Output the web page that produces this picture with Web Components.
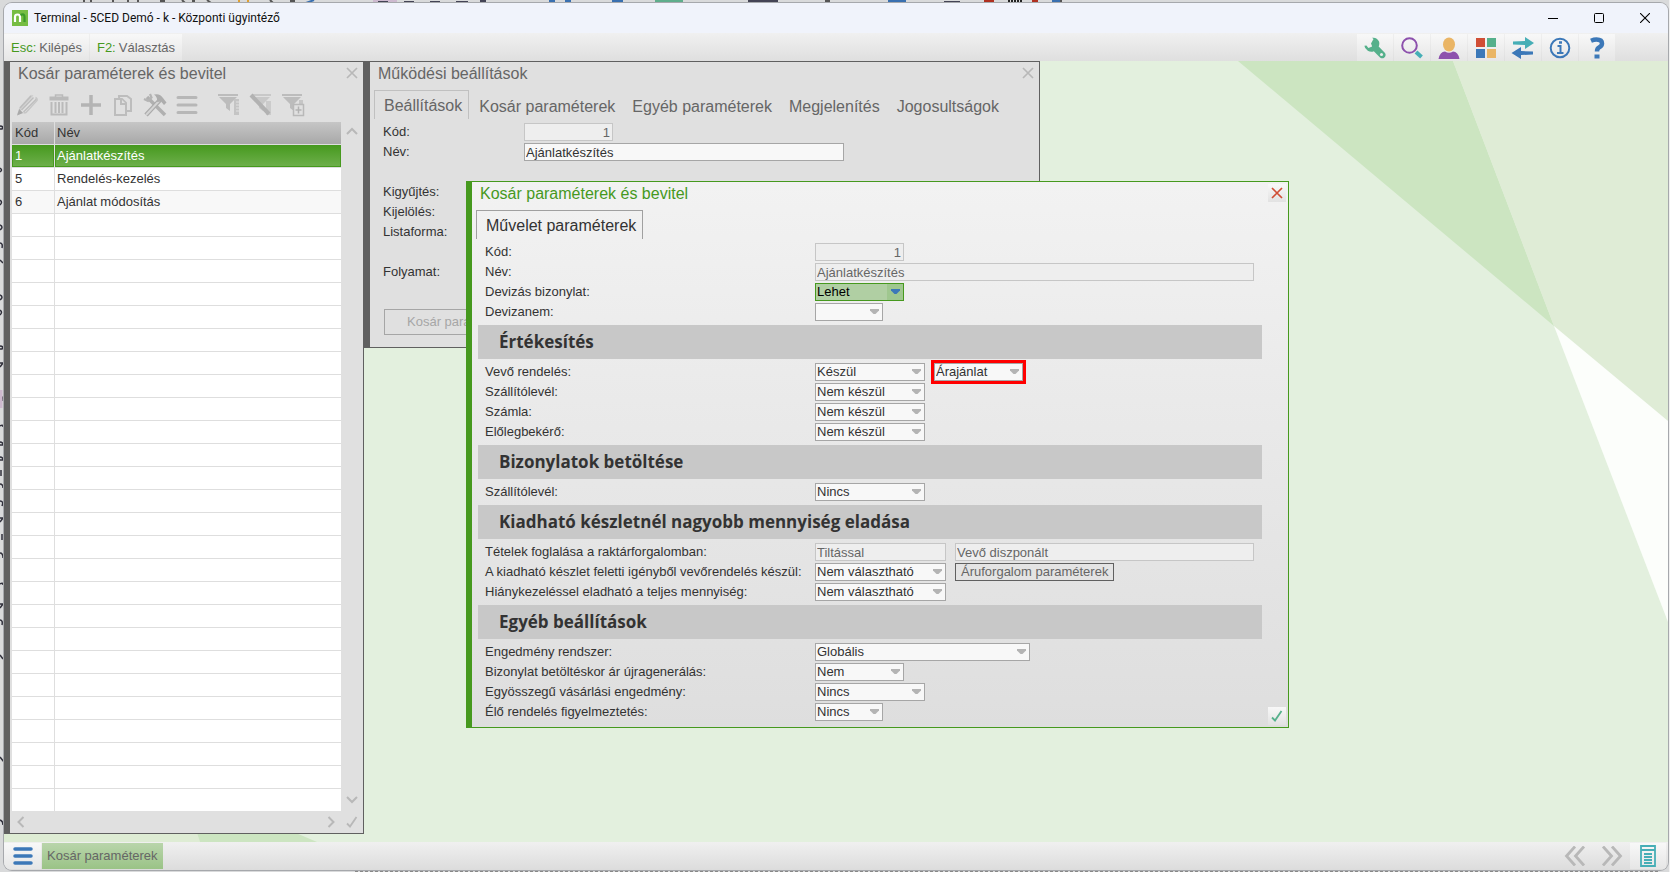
<!DOCTYPE html>
<html lang="hu">
<head>
<meta charset="utf-8">
<title>Terminal - 5CED Demó - k - Központi ügyintéző</title>
<style>
  html, body {
    margin: 0;
    height: 100%;
    overflow: hidden;
  }
  body {
    font: 13px/18px "Liberation Sans", Arial, sans-serif;
    color: #333;
    --green: #46991e;
    --frame: #606060;
    --blue: #3c78b8;
    --teal: #46aeb6;
  }
  #settings { left: 360px; top: 0; width: 676px; height: 287px; }
  #list { left: 0; top: 0; width: 360px; }
  #operation { left: 462px; top: 120px; width: 823px; }
</style>
</head>
<body>
<app-shell>
  <title-bar slot="title" caption="Terminal - 5CED Demó - k - Központi ügyintéző"></title-bar>
  <menu-bar slot="menu"></menu-bar>

  <mdi-window id="settings" caption="Működési beállítások" label-width="141">
    <rail-button slot="rail" icon="close" label="Bezárás"></rail-button>
    <tab-strip tabs="Beállítások|Kosár paraméterek|Egyéb paraméterek|Megjelenítés|Jogosultságok"></tab-strip>
    <param-field label="Kód:" type="number" value="1" width="89" disabled></param-field>
    <param-field label="Név:" type="text" value="Ajánlatkészítés" width="320"></param-field>
    <param-field></param-field>
    <param-field label="Kigyűjtés:" type="select" value="" width="89"></param-field>
    <param-field label="Kijelölés:" type="select" value="" width="89"></param-field>
    <param-field label="Listaforma:" type="select" value="" width="89"></param-field>
    <param-field></param-field>
    <param-field label="Folyamat:" type="select" value="" width="89"></param-field>
    <push-button large disabled>Kosár para</push-button>
  </mdi-window>

  <mdi-window id="list" caption="Kosár paraméterek és bevitel">
    <rail-button slot="rail" icon="close" label="Bezárás"></rail-button>
    <rail-button slot="rail" icon="up" label="Fel" class="top"></rail-button>
    <rail-button slot="rail" icon="down" label="Le" class="push"></rail-button>
    <rail-button slot="rail" icon="check" label="Rendben"></rail-button>
    <record-list></record-list>
  </mdi-window>

  <mdi-window id="operation" caption="Kosár paraméterek és bevitel" active>
    <rail-button slot="rail" icon="close" label="Bezárás" raised tone="red"></rail-button>
    <rail-button slot="rail" icon="check" label="Rendben" raised tone="green" class="push"></rail-button>
    <tab-strip tabs="Művelet paraméterek" active></tab-strip>
    <param-field label="Kód:" type="number" value="1" width="89" disabled></param-field>
    <param-field label="Név:" type="text" value="Ajánlatkészítés" width="439" disabled></param-field>
    <param-field label="Devizás bizonylat:" type="select" value="Lehet" width="89" current></param-field>
    <param-field label="Devizanem:" type="select" value="" width="68"></param-field>
    <section-title>Értékesítés</section-title>
    <param-field label="Vevő rendelés:" type="select" value="Készül" width="110">
      <param-field name="Bizonylat fajta" type="select" value="Árajánlat" width="89" marked></param-field>
    </param-field>
    <param-field label="Szállítólevél:" type="select" value="Nem készül" width="110"></param-field>
    <param-field label="Számla:" type="select" value="Nem készül" width="110"></param-field>
    <param-field label="Előlegbekérő:" type="select" value="Nem készül" width="110"></param-field>
    <section-title>Bizonylatok betöltése</section-title>
    <param-field label="Szállítólevél:" type="select" value="Nincs" width="110"></param-field>
    <section-title>Kiadható készletnél nagyobb mennyiség eladása</section-title>
    <param-field label="Tételek foglalása a raktárforgalomban:" type="text" value="Tiltással" width="131" disabled>
      <param-field name="Foglalás módja" type="text" value="Vevő diszponált" width="299" disabled></param-field>
    </param-field>
    <param-field label="A kiadható készlet feletti igényből vevőrendelés készül:" type="select" value="Nem választható" width="131">
      <push-button>Áruforgalom paraméterek</push-button>
    </param-field>
    <param-field label="Hiánykezeléssel eladható a teljes mennyiség:" type="select" value="Nem választható" width="131"></param-field>
    <section-title>Egyéb beállítások</section-title>
    <param-field label="Engedmény rendszer:" type="select" value="Globális" width="215"></param-field>
    <param-field label="Bizonylat betöltéskor ár újragenerálás:" type="select" value="Nem" width="89"></param-field>
    <param-field label="Egyösszegű vásárlási engedmény:" type="select" value="Nincs" width="110"></param-field>
    <param-field label="Élő rendelés figyelmeztetés:" type="select" value="Nincs" width="68"></param-field>
  </mdi-window>

  <task-bar slot="tasks"></task-bar>
</app-shell>

<script>
const RESET = `
  :host, * { box-sizing: border-box; }
  button { font: inherit; color: inherit; background: none; border: 0; padding: 0; margin: 0; white-space: nowrap; }
  svg { display: block; }
`

const ICONS = {
  close: '<svg width="12" height="12" viewBox="0 0 12 12" fill="none" stroke="currentColor" stroke-width="1.7"><path d="M1 1l10 10M11 1L1 11"/></svg>',
  check: '<svg width="12" height="12" viewBox="0 0 12 12" fill="none" stroke="currentColor" stroke-width="1.8"><path d="M1 7.5L4 10.5 10.5 1"/></svg>',
  up: '<svg width="12" height="12" viewBox="0 0 12 12" fill="none" stroke="currentColor" stroke-width="2"><path d="M1 9l5-5 5 5"/></svg>',
  down: '<svg width="12" height="12" viewBox="0 0 12 12" fill="none" stroke="currentColor" stroke-width="2"><path d="M1 3l5 5 5-5"/></svg>',
  left: '<svg width="12" height="12" viewBox="0 0 12 12" fill="none" stroke="currentColor" stroke-width="2"><path d="M8.500 1l-5 5 5 5"/></svg>',
  right: '<svg width="12" height="12" viewBox="0 0 12 12" fill="none" stroke="currentColor" stroke-width="2"><path d="M3.500 1l5 5-5 5"/></svg>',

  // list toolbar
  edit: '<svg width="24" height="24" viewBox="0 0 24 24"><path d="M2 22l2.500-8L15 2.500q2-1.500 3.500 0L8 14.500l-1.500 2z" fill="#d0d0d0"/><path d="M2 22.500l2.200-6.500 4 4z" fill="#a9a9a9"/><path d="M5 15L16 3M6.500 17L18.500 4.500M8.500 19L21.500 6" stroke="#bdbdbd" stroke-width="1.400" fill="none"/><path d="M20.500 4.500q2 1 1.500 3L11 19.500l-2.500.5" fill="none" stroke="#c6c6c6" stroke-width="1.500"/></svg>',
  trash: '<svg width="24" height="24" viewBox="0 0 24 24" fill="none" stroke="#bababa"><path d="M8.500 4V2h7v2" stroke-width="1.500"/><path d="M2.500 5.500h19" stroke-width="4"/><path d="M4.500 9v12.500h15V9" stroke-width="2"/><path d="M8.500 9v11M12 9v11M15.500 9v11" stroke-width="2"/></svg>',
  add: '<svg width="24" height="24" viewBox="0 0 24 24" stroke="#b4b4b4" stroke-width="3.500"><path d="M2 12h20M12 2v20"/></svg>',
  copy: '<svg width="24" height="24" viewBox="0 0 24 24" fill="#e0e0e0" stroke="#bdbdbd" stroke-width="2"><path d="M9 18h11V6l-4-3H8z"/><path d="M4 6h7l4 4v12H4z"/><path d="M10 6v5h5"/></svg>',
  tools: '<svg width="24" height="24" viewBox="0 0 24 24" fill="none"><path d="M4 4l18 18" stroke="#b0b0b0" stroke-width="3.500"/><path d="M1 6l4 2 3.500-3.500L7 1" stroke="#b4b4b4" stroke-width="2.200"/><path d="M17 7L3 22" stroke="#aaa" stroke-width="4.500"/><path d="M17 7L3 22" stroke="#d4d4d4" stroke-width="2"/><path d="M11 1.500q6-1.500 9 3.500l3.500 4.500-2.500 2.500-3-3.500-4 .5q1-4.500-3-7.500z" fill="#adadad"/></svg>',
  rows: '<svg width="24" height="24" viewBox="0 0 24 24" stroke="#b7b7b7" stroke-width="3" stroke-linecap="round"><path d="M3 4.500h18M3 12h18M3 19.500h18"/></svg>',
  filter: '<svg width="24" height="24" viewBox="0 0 24 24"><path d="M1 1h20v2H1zM2 4h18l-7 7v7l-4-3v-4z" fill="#bcbcbc"/><path d="M17 6h5v16h-5z" fill="#c4c4c4"/><path d="M19 9h3M19 12h3M19 15h3M19 18h3" stroke="#e0e0e0"/></svg>',
  unfilter: '<svg width="24" height="24" viewBox="0 0 24 24"><path d="M3 1h19v2H3zM4 4h17l-7 7v7l-4-3v-4z" fill="#c8c8c8"/><path d="M17 8h5v14h-5z" fill="#cbcbcb"/><path d="M2 2l18 19" stroke="#b2b2b2" stroke-width="4"/></svg>',
  addfilter: '<svg width="24" height="24" viewBox="0 0 24 24"><path d="M1 1h20v2H1zM2 4h18l-7 7v7l-4-3v-4z" fill="#bcbcbc"/><path d="M18 7h4v4h-4z" fill="#c6c6c6"/><path d="M12.500 11.500h10v11h-10z" fill="#e0e0e0" stroke="#b9b9b9" stroke-width="1.500"/><path d="M17.500 13.500v7M14.500 17h6" stroke="#b2b2b2" stroke-width="1.500"/></svg>',

  // menu bar
  wrench: '<svg width="22" height="22" viewBox="0 0 22 22"><path d="M7 6.500L9.500 2 8 .8q5-.8 7 3.700.8 2.500-.3 5l6.300 6.500q1.500 2.700-.6 4.500-2.200 1.700-4.400 0l-6.200-6.200q-3 1.300-6-.6Q.5 11.500.4 8.700l2-.1 2 2.400 3.800-1.500z" fill="#55b08b"/><circle cx="17.500" cy="17.500" r="1.500" fill="#eee"/></svg>',
  search: '<svg width="22" height="22" viewBox="0 0 22 22" fill="none"><circle cx="8.500" cy="8.500" r="7.300" stroke="#8d51ad" stroke-width="2"/><path d="M15 15l5.500 5" stroke="#46aeb6" stroke-width="4"/></svg>',
  user: '<svg width="22" height="22" viewBox="0 0 22 22"><path d="M.5 22Q2 14.500 7 14.500q4 2.500 8 0 5 0 6.500 7.500z" fill="#8d51ad"/><ellipse cx="11" cy="7.500" rx="6" ry="7" fill="#eab565"/></svg>',
  grid: '<svg width="22" height="22" viewBox="0 0 22 22"><path d="M1 1h9v9H1z" fill="#d04e35"/><path d="M12 1h9v9h-9z" fill="#55b08b"/><path d="M1 12h9v9H1z" fill="#3c78b8"/><path d="M12 12h9v9h-9z" fill="#eab565"/></svg>',
  swap: '<svg width="24" height="22" viewBox="0 0 24 22"><path d="M2 4.500l12-.5V0l9 6-9 6V8L2 7.500z" fill="#46aeb6"/><path d="M22 14.500L10 14v-4L.5 16l9.500 6v-4l12-.5z" fill="#3c78b8"/></svg>',
  info: '<svg width="22" height="22" viewBox="0 0 22 22" fill="none" stroke="#3c78b8"><circle cx="11" cy="11" r="9.300" stroke-width="2"/><path d="M8.500 9h3v7M8 16h6.500" stroke-width="2"/><path d="M10 5.500h3" stroke-width="2.500"/></svg>',
  help: '<svg width="22" height="22" viewBox="0 0 22 22" fill="none" stroke="#3c78b8"><path d="M5 3.800Q8 2.500 10.500 2.500q5.500 0 5.500 4 0 2.500-3 4-2 1-2 4" stroke-width="4.500"/><path d="M8.500 19.500h5" stroke-width="4"/></svg>',

  // task bar
  menu: '<svg width="22" height="20" viewBox="0 0 22 20" stroke="#3c78b8" stroke-width="3.500" stroke-linecap="round"><path d="M3 3h16M3 10h16M3 17h16"/></svg>',
  first: '<svg width="22" height="20" viewBox="0 0 22 20" fill="none" stroke="#b8b8b8" stroke-width="2.800"><path d="M11 0.500L2.500 10l8.500 9.500M20 0.500L11.500 10l8.500 9.500"/></svg>',
  last: '<svg width="22" height="20" viewBox="0 0 22 20" fill="none" stroke="#b8b8b8" stroke-width="2.800"><path d="M2 0.500L10.500 10 2 19.500M11 0.500L19.500 10 11 19.500"/></svg>',
  sheet: '<svg width="16" height="22" viewBox="0 0 16 22" fill="none" stroke="#46aeb6" stroke-width="1.800"><path d="M1 1h14v20H1zM1 5h14M4 9h8M4 12h8M4 15h8M4 18h8"/></svg>'
}

function define (name, render) {
  customElements.define(name, class extends HTMLElement {
    connectedCallback () {
      if (this.shadowRoot) return
      this.attachShadow({ mode: 'open' })
      const template = document.createElement('template')
      template.innerHTML = `<style>${RESET}</style>` + render(this)
      this.shadowRoot.append(template.content.cloneNode(true))
    }
  })
}

define('app-shell', () => `
  <style>
    :host {
      display: grid;
      height: 100vh;
      padding: 3px 2px 2px 4px;
      background: #d9dadb;
      position: relative;
    }
    .behind { position: absolute; left: 0; top: 0; width: 100%; height: 100%; }
    .frame {
      position: relative;
      display: flex;
      flex-direction: column;
      min-height: 0;
      border-radius: 8px;
      overflow: hidden;
      box-shadow: 0 0 0 1px #a6a8ac;
    }
    main { position: relative; flex: 1; min-height: 0; background: #e3f0de; overflow: hidden; }
    .wall { position: absolute; right: 0; top: 0; width: 430px; height: 561px; }
    .corner { position: absolute; left: 0; bottom: 0; width: 313px; height: 9px; }
  </style>
  <!-- slivers of the document that lies under the window -->
  <svg class="behind" fill="none" aria-hidden="true">
    <path d="M84 0v3M91 0v3M113 0v3M128 0v3M138 0v3M160 1h5M182 0l3 3M192 1h3M207 0l4 3M270 0l3 3M290 1h5M825 1h5M1056 1h6" stroke="#555" stroke-width="2"/>
    <path d="M306 3l8-3M549 1h6M565 1h6M612 1h11M888 1h18M1052 1h8" stroke="#3a70b0" stroke-width="2"/>
    <path d="M239 0v3M248 0v3" stroke="#e0a030" stroke-width="2"/>
    <path d="M373 1h24" stroke="#cdb9cf" stroke-width="3"/>
    <path d="M378 2h10M404 2h10M430 2h10M456 2h12M480 1h6M748 1h30M944 2h16" stroke="#445" stroke-width="2"/>
    <path d="M655 1h28" stroke="#5fae8c" stroke-width="3"/>
    <path d="M984 1h10M1032 1h6" stroke="#b03020" stroke-width="3"/>
    <path d="M1008 1h15" stroke="#222" stroke-width="3" stroke-dasharray="2 1"/>
    <path d="M0 126q4 0 2 3H0M0 168q3 2 0 4M0 200q3 2 0 5M0 225q4 2 0 5M0 243q3 0 2 5M0 260l3 3M0 295q4 2 0 5M0 310q3 2 0 5M0 346q4 0 2 3H0M0 363h3l-3 4M0 396q3 0 3 5M0 426q3-2 3 1M0 442q3 0 3 3H0M0 457q3 0 3 3H0M1 470v6M0 484q3 0 3 4M0 501q4 0 2 5M0 518h3l-3 4M2 534v6M0 553q3 0 3 5M0 584q3-2 3 1M0 604h3l-3 4M0 620q3 0 2 5M0 655l3 4M0 757l4 5M0 820q3 1 3 5" stroke="#30303c" stroke-width="1.500"/>
    <path d="M1 390v18" stroke="#cdb9cf" stroke-width="3"/>
    <path d="M355 871.500H1660" stroke="#888" stroke-dasharray="3 2"/>
    <path d="M1669.500 0v872" stroke="#f0f0f0"/>
  </svg>
  <div class="frame">
    <slot name="title"></slot>
    <slot name="menu"></slot>
    <main>
      <svg class="wall" viewBox="0 0 430 561" aria-hidden="true">
        <path d="M0 0h215l101 265z" fill="#cce5c1"/>
        <path d="M215 0h215v360L316 265z" fill="#dfecd6"/>
        <path d="M316 265l114 95v201z" fill="#fcfefb"/>
      </svg>
      <svg class="corner" viewBox="0 0 313 9" aria-hidden="true">
        <path d="M0 0h193l3 9H0z" fill="#deecd4"/>
        <path d="M193 0h99l21 9H196z" fill="#cce5c1"/>
      </svg>
      <slot></slot>
    </main>
    <slot name="tasks"></slot>
  </div>
`)

define('title-bar', el => `
  <style>
    :host {
      display: flex;
      align-items: center;
      height: 30px;
      flex: none;
      padding-left: 8px;
      background: #f0f3fb;
      color: #111;
      font: 12px/18px Roboto, "Open Sans", sans-serif;
    }
    h1 { flex: 1; margin: 0 0 0 6px; font: inherit; }
    button { width: 46px; height: 28px; display: grid; place-items: center; }
  </style>
  <svg width="16" height="16" viewBox="0 0 16 16" aria-hidden="true">
    <rect width="16" height="16" fill="#76bd43"/>
    <path d="M3 12V7q0-2.500 2.500-2.500T8 7v5" fill="none" stroke="#fff" stroke-width="2.200"/>
    <path d="M8.500 5Q12.500 3 12.500 7v5" fill="none" stroke="#3c9a2a" stroke-width="2.200"/>
  </svg>
  <h1>${el.getAttribute('caption')}</h1>
  <button aria-label="Kis méret"><svg width="10" height="10" stroke="#000"><path d="M0 5.500h10"/></svg></button>
  <button aria-label="Teljes méret"><svg width="10" height="10" fill="none" stroke="#000"><rect x=".5" y=".5" width="9" height="9" rx="1"/></svg></button>
  <button aria-label="Bezárás"><svg width="10" height="10" stroke="#000" stroke-width="1.100"><path d="M0 0l10 10M10 0L0 10"/></svg></button>
`)

define('menu-bar', () => `
  <style>
    :host {
      display: flex;
      justify-content: space-between;
      height: 28px;
      flex: none;
      padding: 1px 53px 0 0;
      background: linear-gradient(#f0f0f0, #dfdfdf);
      color: #666;
    }
    div { display: flex; gap: 1px; }
    button { background: linear-gradient(#f8f8f8, #e6e6e6); }
    .key { display: flex; align-items: center; gap: 3px; padding: 0 7px; }
    b { font-weight: normal; color: var(--green); }
    .tool { width: 36px; display: grid; place-items: center; }
  </style>
  <div>
    <button class="key"><b>Esc:</b> Kilépés</button>
    <button class="key"><b>F2:</b> Választás</button>
  </div>
  <div>
    ${[['wrench', 'Beállítás'], ['search', 'Keresés'], ['user', 'Felhasználó'], ['grid', 'Modulok'], ['swap', 'Váltás'], ['info', 'Információ'], ['help', 'Súgó']]
      .map(([icon, label]) => `<button class="tool" aria-label="${label}">${ICONS[icon]}</button>`).join('')}
  </div>
`)

define('mdi-window', el => {
  const active = el.hasAttribute('active')
  return `
  <style>
    :host {
      position: absolute;
      display: flex;
      border: 1px solid ${active ? 'var(--green)' : 'var(--frame)'};
      border-left-width: 6px;
      background: ${active ? 'linear-gradient(#f2f2f2, #dedede)' : '#e0e0e0'};
      --label-width: ${el.getAttribute('label-width') || 330}px;
    }
    .content { flex: 1; min-width: 0; padding-bottom: ${active ? 5 : 0}px; }
    h2 {
      margin: 0 0 4px;
      padding-left: 8px;
      font: 16px/24px "Liberation Sans", Arial, sans-serif;
      color: ${active ? 'var(--green)' : '#666'};
    }
    .rail { width: 22px; display: flex; flex-direction: column; }
    ::slotted(.top) { margin-top: 36px; }
    ::slotted(.push) { margin-top: auto; }
  </style>
  <div class="content">
    <h2>${el.getAttribute('caption')}</h2>
    <slot></slot>
  </div>
  <div class="rail"><slot name="rail"></slot></div>
`
})

define('rail-button', el => `
  <style>
    :host { display: block; padding: 2px; color: #b8b8b8; }
    :host([tone=red]) { color: #d04e35; }
    :host([tone=green]) { color: #55b08b; }
    button { display: grid; place-items: center; width: 18px; height: 18px; }
    :host([raised]) button { background: linear-gradient(#f8f8f8, #e2e2e2); }
  </style>
  <button aria-label="${el.getAttribute('label')}">${ICONS[el.getAttribute('icon')]}</button>
`)

define('tab-strip', el => {
  const active = el.hasAttribute('active')
  return `
  <style>
    :host {
      display: flex;
      height: 29px;
      margin: 0 0 3px 4px;
      font-size: 16px;
      color: ${active ? '#333' : '#666'};
    }
    button { padding: 4px 7px 0 10px; }
    button[aria-selected=true] {
      padding: 1px 6px 0 9px;
      border: 1px solid ${active ? '#a0a0a0' : '#c0c0c0'};
      border-bottom: 0;
    }
  </style>
  ${el.getAttribute('tabs').split('|').map((tab, i) => `<button role="tab" aria-selected="${i === 0}">${tab}</button>`).join('')}
`
})

define('section-title', () => `
  <style>
    :host { display: block; margin: 3px 4px 3px 6px; background: #c8c8c8; }
    h3 {
      margin: 0;
      padding-left: 21px;
      font: bold 17px/34px "Open Sans", "Noto Sans", sans-serif;
    }
  </style>
  <h3><slot></slot></h3>
`)

define('param-field', el => {
  const label = el.getAttribute('label')
  const type = el.getAttribute('type')
  const value = el.getAttribute('value')
  const disabled = el.hasAttribute('disabled') ? 'disabled' : ''
  const attrs = label ? 'id="value"' : `aria-label="${el.getAttribute('name')}"`
  let control = ''
  if (type === 'select') {
    control = `<select ${attrs}><option>${value}</option></select>
      <svg width="9" height="5" aria-hidden="true"><path d="M0 0h9v1.500L5.500 5h-2L0 1.500z"/></svg>`
  } else if (type) {
    control = `<input ${attrs} type="text" class="${type}" value="${value}" ${disabled}>`
  }
  return `
  <style>
    :host { display: flex; align-items: center; gap: 9px; height: 20px; padding-left: 13px; }
    :host([name]) { padding: 0; }
    label { width: var(--label-width); margin-right: -9px; white-space: nowrap; }
    .box { position: relative; width: ${el.getAttribute('width') || 0}px; height: 18px; }
    input, select {
      display: block;
      appearance: none;
      width: 100%;
      height: 18px;
      margin: 0;
      padding: 0 1px;
      border: 1px solid #a6a6a6;
      border-radius: 0;
      outline: 0;
      background: #f8f8f8;
      color: #333;
      font: inherit;
      line-height: 16px;
    }
    input:disabled { border-color: #c6c6c6; background: #eee; color: #666; }
    .number { text-align: right; padding-right: 2px; }
    svg { position: absolute; right: 4px; top: 6px; fill: #b4b4b4; pointer-events: none; }
    :host([current]) select {
      border-color: var(--green);
      background: linear-gradient(to left, #9fc78f 16px, #b0cfa3 16px);
      color: #000;
    }
    :host([current]) svg { fill: var(--blue); }
    :host([marked]) .box { outline: 3px solid #f00; }
  </style>
  ${label ? `<label for="value">${label}</label>` : ''}
  ${control ? `<div class="box">${control}</div>` : ''}
  <slot></slot>
`
})

define('push-button', el => `
  <style>
    :host { display: block; color: #666; }
    :host([large]) { margin: 27px 0 0 14px; color: #a6a6a6; }
    button { height: 18px; padding: 0 5px; border: 1px solid #606060; line-height: 16px; }
    :host([large]) button { width: 160px; height: 26px; padding: 0 22px; border-color: #a6a6a6; text-align: left; }
  </style>
  <button ${el.hasAttribute('disabled') ? 'disabled' : ''}><slot></slot></button>
`)

const RECORDS = [['1', 'Ajánlatkészítés'], ['5', 'Rendelés-kezelés'], ['6', 'Ajánlat módosítás']]
const ROW_COUNT = 29

define('record-list', () => {
  const rows = Array.from({ length: ROW_COUNT }, (_, i) => RECORDS[i] || ['', ''])
  return `
  <style>
    :host { display: block; }
    .tools { display: flex; height: 32px; padding: 0 0 0 1px; }
    .tools button { width: 32px; height: 30px; display: grid; place-items: center; }
    .tools .gap { margin-left: 10px; }
    table {
      width: calc(100% - 2px);
      margin-left: 2px;
      border-spacing: 0;
      table-layout: fixed;
      background: #fff;
    }
    th, td { height: 23px; padding: 0 2px; border-bottom: 1px solid #dedede; text-align: left; font-weight: normal; }
    th:first-child, td:first-child { width: 43px; padding-left: 3px; border-right: 1px solid #dedede; }
    th { background: linear-gradient(#c6c6c6, #a8a8a8); background-clip: padding-box; }
    tr:nth-child(3) td { background: #f8f8f8; background-clip: padding-box; }
    .selected td {
      background: linear-gradient(#46991e, #6fb04d);
      background-clip: padding-box;
      box-shadow: inset 0 0 0 1px var(--green);
      color: #fff;
    }
    tbody tr:last-child td { height: 22px; border-bottom: 0; }
    .scroll { display: flex; justify-content: space-between; height: 22px; padding: 0 4px 0 5px; color: #b8b8b8; }
    .scroll button { width: 12px; }
  </style>
  <div class="tools">
    ${[['edit', 'Módosítás'], ['trash', 'Törlés'], ['add', 'Új'], ['copy', 'Másolás'], ['tools', 'Eszközök'], ['rows', 'Menü'], ['filter', 'Szűrő'], ['unfilter', 'Szűrő törlése'], ['addfilter', 'Új szűrő']]
      .map(([icon, label]) => `<button class="${icon === 'filter' ? 'gap' : ''}" aria-label="${label}">${ICONS[icon]}</button>`).join('')}
  </div>
  <table>
    <thead><tr><th>Kód</th><th>Név</th></tr></thead>
    <tbody>
      ${rows.map(([code, name], i) => `<tr class="${i === 0 ? 'selected' : ''}"><td>${code}</td><td>${name}</td></tr>`).join('')}
    </tbody>
  </table>
  <div class="scroll">
    <button aria-label="Balra">${ICONS.left}</button>
    <button aria-label="Jobbra">${ICONS.right}</button>
  </div>
`
})

define('task-bar', () => `
  <style>
    :host {
      display: flex;
      height: 28px;
      flex: none;
      padding: 1px 2px 1px 0;
      background: linear-gradient(#f0f0f0, #dcdcdc);
      color: #666;
    }
    button { display: grid; place-items: center; width: 37px; }
    .menu { margin-right: 1px; background: linear-gradient(#f8f8f8, #e6e6e6); }
    .task { width: auto; padding: 0 5px; background: linear-gradient(#b9d5ab, #9ac386); }
    .first { margin-left: auto; }
    .sheet { width: 36px; background: linear-gradient(#f8f8f8, #e6e6e6); }
  </style>
  <button class="menu" aria-label="Menü">${ICONS.menu}</button>
  <button class="task">Kosár paraméterek</button>
  <button class="first" aria-label="Előző">${ICONS.first}</button>
  <button aria-label="Következő">${ICONS.last}</button>
  <button class="sheet" aria-label="Lista">${ICONS.sheet}</button>
`)
</script>
</body>
</html>
